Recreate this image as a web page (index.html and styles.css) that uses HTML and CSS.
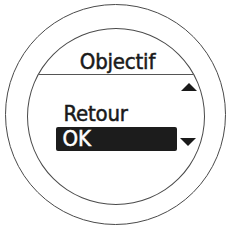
FILE: index.html
```html
<!DOCTYPE html>
<html lang="fr">
<head>
  <meta charset="UTF-8">
  <title>Objectif</title>
  <link rel="stylesheet" href="styles.css">
</head>
<body>

<div class="watch">
  <div class="face">
    <div class="title">Objectif</div>

    <div class="menu">
      <div class="arrow-row">
        <svg class="arrow" width="16" height="8" viewBox="0 0 16 8"><polygon points="8,0 16,8 0,8"/></svg>
      </div>
      <div class="item">Retour</div>
      <div class="item-row">
        <div class="item selected">OK</div>
        <svg class="arrow" width="16" height="8" viewBox="0 0 16 8"><polygon points="0,0 16,0 8,8"/></svg>
      </div>
    </div>
  </div>
</div>

</body>
</html>
```

FILE: styles.css
```css
  body {
    margin: 0;
    background: #fff;
    font-family: "DejaVu Sans Condensed", "DejaVu Sans", sans-serif;
    color: #1a1a1a;
  }
  .watch {
    width: 221px;
    height: 221px;
    margin: 4px 0 0 5px;
    border: 1.5px solid #4a4a4a;
    border-radius: 50%;
    box-sizing: border-box;
    display: flex;
    align-items: center;
    justify-content: center;
  }
  .face {
    width: 178px;
    height: 177px;
    margin: 3px 0 0 0;
    border: 1.5px solid #4a4a4a;
    border-radius: 50%;
    box-sizing: border-box;
    overflow: hidden;
  }
  .title {
    height: 24px;
    padding-top: 21px;
    line-height: 24px;
    font-size: 22px;
    -webkit-text-stroke: 0.5px currentColor;
    letter-spacing: -0.2px;
    text-align: center;
    padding-left: 4px;
    border-bottom: 1.5px solid #555;
  }
  .menu {
    padding-left: 28px;
  }
  .arrow-row {
    height: 27px;
    width: 141px;
    display: flex;
    justify-content: flex-end;
    align-items: flex-start;
  }
  .arrow-row .arrow {
    margin-top: 8px;
  }
  .arrow {
    fill: #1a1a1a;
    display: block;
  }
  .item {
    height: 24px;
    line-height: 24px;
    font-size: 22px;
    -webkit-text-stroke: 0.5px currentColor;
    letter-spacing: -0.2px;
    padding-left: 8px;
  }
  .item-row {
    display: flex;
    align-items: center;
    gap: 3px;
    margin-top: 1px;
  }
  .item-row .arrow {
    margin-top: 6px;
  }
  .selected {
    width: 114px;
    padding-left: 7px;
    background: #1c1c1c;
    color: #fff;
    border-radius: 2px;
  }
```
